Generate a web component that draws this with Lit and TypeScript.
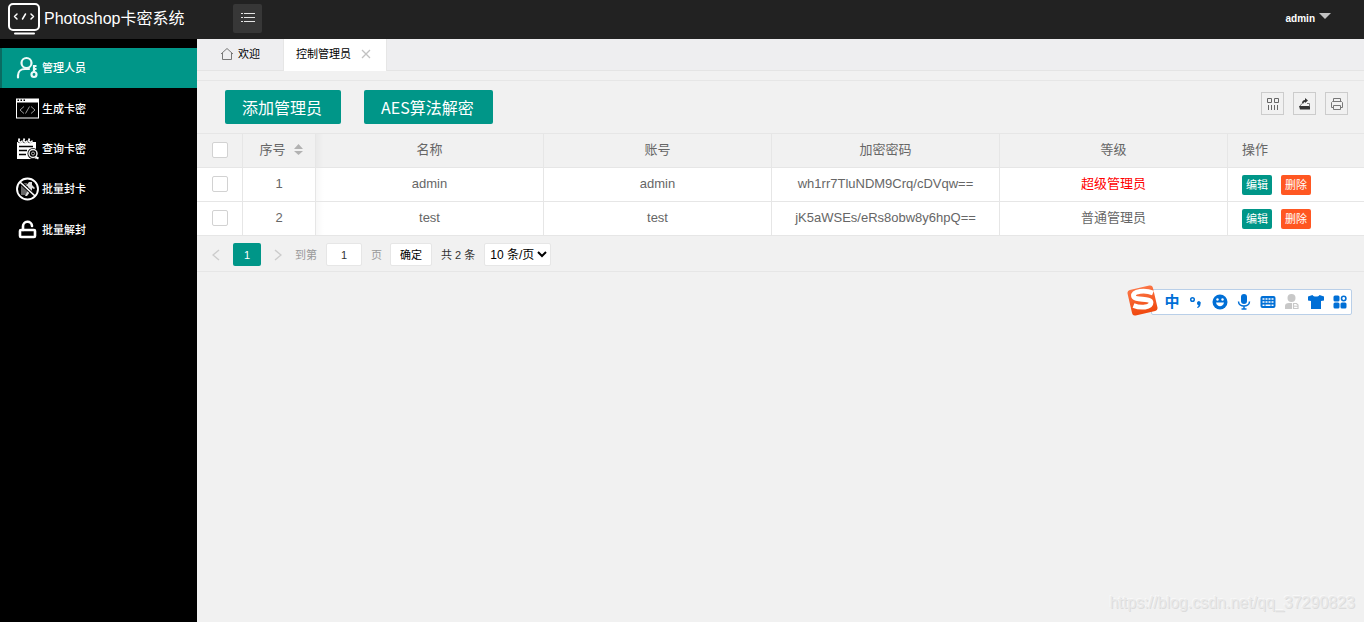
import { LitElement, html, css, svg } from "lit";
import { customElement, state } from "lit/decorators.js";

interface Admin {
  id: number;
  name: string;
  account: string;
  secret: string;
  level: string;
  top: boolean;
}

const ADMINS: Admin[] = [
  { id: 1, name: "admin", account: "admin", secret: "wh1rr7TluNDM9Crq/cDVqw==", level: "超级管理员", top: true },
  { id: 2, name: "test", account: "test", secret: "jK5aWSEs/eRs8obw8y6hpQ==", level: "普通管理员", top: false },
];

const logo = html`<svg class="logo" viewBox="0 0 32 32" fill="none" stroke="#fff" stroke-linecap="round" stroke-linejoin="round" aria-hidden="true">
  <rect x="1" y="1" width="30" height="26" rx="4" stroke-width="2"/>
  <path d="M9 11l-2.500 2.500L9 16M23 11l2.500 2.500L23 16M17.500 11l-3 5" stroke-width="1.500"/>
  <path d="M7 30.500h19" stroke-width="2"/></svg>`;

const menuIcon = html`<svg width="14" height="9" viewBox="0 0 14 9" fill="#e4e4e4" aria-hidden="true">
  <path d="M0 0h2v1H0zM0 4h2v1H0zM0 8h2v1H0zM3 0h11v1H3zM3 4h11v1H3zM3 8h11v1H3z"/></svg>`;

const iconStaff = svg`<g fill="none" stroke="#eefaf8" stroke-width="2.200" stroke-linecap="round">
  <circle cx="10.500" cy="7" r="5"/><path d="M2 21.500v-2c0-4 3-6.500 7-6.500h4"/>
  <circle cx="18" cy="18.500" r="2.500"/><path d="M18 15.500V10h2.500M18 13h2.500" stroke-linecap="butt"/></g>`;
const iconCode = svg`<path fill="#fff" d="M0 1.500h23v20H0zM1 5.500v15h21v-15zM1.500 2.500V4H3V2.500zM4.500 2.500V4H6V2.500zM7.500 2.500V4H9V2.500z" fill-rule="evenodd"/>
  <path d="M8 9.500L4 13l4 3.500M15 9.500l4 3.500-4 3.500M13.500 9.500l-4 7" fill="none" stroke="#999"/>`;
const iconQuery = svg`<path fill="#fff" d="M1 5h19v17H1z"/>
  <path d="M2.500 1.500v2q1.500 2 3 0v-2M7.500 1.500v2q1.500 2 3 0v-2M12.500 1.500v2q1.500 2 3 0v-2" fill="none" stroke="#000" stroke-width="3.500"/>
  <path d="M3.500 1.500q-1.500 3 .5 3.500t2-1.500M8.500 1.500q-1.500 3 .5 3.500t2-1.500M13.500 1.500q-1.500 3 .5 3.500t2-1.500" fill="none" stroke="#fff" stroke-width="1.700"/>
  <path d="M3 9.500h14M3 13.500h8M3 17.500h7" stroke="#000" stroke-width="1.600"/>
  <circle cx="17" cy="16.500" r="5.500" fill="#000"/><circle cx="17" cy="16.500" r="4" fill="none" stroke="#eee" stroke-width="1.500"/>
  <circle cx="17" cy="16.500" r="1.500" fill="none" stroke="#bbb"/><path d="M19.500 20l3 1.500" stroke="#fff" stroke-width="2"/>`;
const iconBan = svg`<path d="M5 6h6v12H5z" fill="#666"/><path d="M13 5h3v3l3 3-1 1-2-1v3l3 5h-2l-3-4-3 4h-2l3-6V9l-2 2-1-1z" fill="#ddd"/>
  <path d="M4 5l15 14" stroke="#000" stroke-width="3.500"/><path d="M4 5l15 14" stroke="#fff" stroke-width="1.700"/>
  <circle cx="11.500" cy="12" r="10.500" fill="none" stroke="#fff" stroke-width="1.900"/>`;
const iconUnlock = svg`<rect x="4" y="12" width="15" height="7" rx="1" fill="none" stroke="#fff" stroke-width="2.600"/>
  <path d="M7 12V8.500a4.500 4.500 0 0 1 9-.5" fill="none" stroke="#fff" stroke-width="2.600" stroke-linecap="round"/>`;

const MENU = [
  { text: "管理人员", icon: iconStaff },
  { text: "生成卡密", icon: iconCode },
  { text: "查询卡密", icon: iconQuery },
  { text: "批量封卡", icon: iconBan },
  { text: "批量解封", icon: iconUnlock },
];

const IME_ICONS = [
  { label: "标点", icon: svg`<circle cx="4.500" cy="5.500" r="1.800" fill="none" stroke-width="1.500"/><path d="M9 9a1.900 1.900 0 1 1 3.500 1c0 2-1 3.500-3 4l-.5-1c1-.3 1.500-1 1.500-1.700C9.500 11 9 10 9 9z" stroke="none"/>` },
  { label: "表情", icon: svg`<circle cx="8" cy="8" r="7.500" stroke="none"/><path d="M4 8.500c1 5 7 5 8 0z" fill="#fff" stroke="none"/><circle cx="5.500" cy="5.500" r="1.200" fill="#fff" stroke="none"/><circle cx="10.500" cy="5.500" r="1.200" fill="#fff" stroke="none"/>` },
  { label: "语音", icon: svg`<rect x="5" y="0" width="6" height="10" rx="3" stroke="none"/><path d="M2.500 7.500c0 6 11 6 11 0M8 12v3M5.500 15h5" fill="none" stroke-width="1.500"/>` },
  { label: "键盘", icon: svg`<rect x=".5" y="2" width="15" height="12" rx="2" stroke="none"/><path d="M2.500 5h11M2.500 8h11" stroke="#fff" stroke-width="1.600" stroke-dasharray="2 1"/><path d="M2.500 11.200h2M5.500 11.200h5M11.500 11.200h2" stroke="#fff" stroke-width="1.600"/>` },
  { label: "账户", icon: svg`<g fill="#c8c8c8" stroke="none"><circle cx="7.500" cy="4" r="4"/><path d="M1 15V12q0-3 4-3h6q3 0 3 3v3z"/><path d="M8 8h7v8H8z" fill="#fff"/><path d="M9.500 9.500h3l1.500 1.500v3.500H9.500z" fill="none" stroke="#c8c8c8" stroke-width="1.200"/><path d="M10 12.200h4" stroke="#c8c8c8"/></g>` },
  { label: "皮肤", icon: svg`<path d="M0 2.500L4.500 1c1 2 6 2 7 0L16 2.500v4l-3 .5v8H3V7l-3-.5z" stroke="none"/>` },
  { label: "工具箱", icon: svg`<rect x="1.500" y="1.500" width="6" height="6" rx="1.500" stroke="none"/><rect x="1.500" y="8.500" width="6" height="6" rx="1.500" stroke="none"/><rect x="8.500" y="8.500" width="6" height="6" rx="1.500" stroke="none"/><circle cx="11.700" cy="4.500" r="2.200" fill="none" stroke-width="1.600"/>` },
];

@customElement("app-root")
export class AppRoot extends LitElement {
  @state() private active = 0;

  static styles = css`
    :host {
      display: flex;
      flex-direction: column;
      position: relative;
      min-height: 100vh;
      background: #f1f1f1;
      color: #666;
      font: 13px/20px "Liberation Sans", "Noto Sans CJK SC", sans-serif;
    }
    *, *::before, *::after { box-sizing: border-box; }
    button, input, select { font: inherit; margin: 0; padding: 0; border: 0; }
    button { cursor: pointer; }
    a { color: inherit; text-decoration: none; }
    svg { display: block; flex: none; }

    .header { display: flex; align-items: center; height: 39px; padding: 0 33px 2px 8px; background: #222; color: #fff; }
    .brand { display: flex; align-items: center; gap: 4px; width: 225px; font-size: 16px; }
    .logo { width: 32px; height: 32px; }
    .toggle { display: grid; place-items: center; width: 29px; height: 29px; padding-bottom: 3px; border-radius: 2px; background: #373737; }
    .user { display: flex; align-items: center; gap: 4px; margin-left: auto; font-size: 10px; font-weight: 700; background: none; color: #fff; }
    .caret { border: 6px solid transparent; border-top-color: #c2c2c2; border-bottom: 0; margin-bottom: 5px; }

    .body { display: flex; flex: 1; }
    .side { width: 197px; padding-top: 9px; background: #000; }
    .menu { display: flex; flex-direction: column; height: 202px; margin: 0; padding: 0; list-style: none; }
    .menu li { flex: 1; display: flex; }
    .item { flex: 1; display: flex; align-items: center; gap: 3px; padding-left: 14px; border-left: 2px solid transparent; color: #fff; font-size: 11px; font-weight: 500; }
    .item.on { background: #009688; border-left-color: #0a6b62; }

    .main { flex: 1; min-width: 0; }
    .tabs { display: flex; height: 32px; border-bottom: 1px solid #e4e4e4; background: #eeeef0; color: #000; font-size: 11px; }
    .tab { display: flex; align-items: center; height: 31px; padding: 0 23px 2px 24px; gap: 5px; border-right: 1px solid #e6e6e6; }
    .tab.on { height: 32px; padding: 0 15px 2px 12px; gap: 10px; background: #fff; }
    .close { display: grid; background: none; }
    .strip { height: 10px; border-bottom: 1px solid #e6e6e6; }
    .tools { display: flex; align-items: flex-start; height: 52px; padding: 9px 16px 0 28px; gap: 23px; }
    .btn { height: 34px; padding: 0 19px 0 17px; border-radius: 2px; background: #009688; color: #fff; font: 16px/32px "Noto Sans CJK SC", sans-serif; white-space: nowrap; }
    .actions { display: flex; gap: 9px; margin: 2px 0 0 auto; }
    .tool { display: grid; place-items: center; width: 23px; height: 23px; border: 1px solid #ccc; background: none; }

    .grid { width: 100%; table-layout: fixed; border-collapse: separate; border-spacing: 0; border-top: 1px solid #e6e6e6; }
    .grid th, .grid td { height: 34px; padding: 0 0 2px; border-right: 1px solid #e6e6e6; border-bottom: 1px solid #e6e6e6; font-weight: 400; text-align: center; line-height: 30px; }
    .grid td { background: #fff; }
    .grid th:last-child, .grid td:last-child { border-right: 0; padding-left: 14px; text-align: left; }
    .grid th:nth-child(3), .grid td:nth-child(3) { background-image: linear-gradient(to right, rgba(0, 0, 0, 0.03), transparent 8px); }
    .c-check { width: 46px; }
    .c-id { width: 73px; }
    .c-op { width: 136px; }
    .check { appearance: none; display: block; width: 16px; height: 16px; margin: 0 auto; border: 1px solid #d2d2d2; border-radius: 2px; background: #fff; }
    .check:checked { background: #009688; }
    .sort { display: flex; align-items: center; justify-content: center; gap: 8px; padding-left: 4px; }
    .red { color: #f00; }
    .ops { display: flex; gap: 9px; padding-top: 2px; }
    .mini { height: 20px; padding: 0 4px; border-radius: 2px; background: #009688; color: #fff; font-size: 11px; line-height: 18px; }
    .mini.del { background: #ff5722; }

    .pager { display: flex; align-items: center; height: 36px; padding: 2px 0 0 15px; border-bottom: 1px solid #e6e6e6; color: #999; font-size: 11px; }
    .arrow { display: grid; place-items: center; width: 8px; height: 23px; background: none; }
    .page { width: 28px; height: 23px; margin: 0 13px; border-radius: 2px; background: #009688; color: #fff; }
    .jump { display: flex; align-items: center; gap: 9px; margin: 0 8px 0 13px; }
    .num { width: 36px; height: 23px; border: 1px solid #e6e6e6; border-radius: 2px; background: #fff; color: #333; text-align: center; }
    .go { width: 42px; height: 23px; border: 1px solid #e6e6e6; border-radius: 2px; background: #fff; color: #000; }
    .total { margin: 0 9px; color: #333; }
    .limit { position: relative; display: flex; align-items: center; }
    .size { appearance: none; width: 67px; height: 23px; padding-left: 5px; border: 1px solid #e6e6e6; border-radius: 2px; background: #fff; color: #000; font-size: 12px; }
    .chev { position: absolute; right: 4px; pointer-events: none; }

    .ime { position: absolute; right: 12px; top: 289px; display: flex; align-items: center; height: 26px; padding: 0 3px 0 12px; gap: 8px; border: 1px solid #b9cfe8; border-radius: 2px; background: #fff; }
    .ime button { display: grid; place-items: center; width: 16px; height: 16px; background: none; color: #006fd6; }
    .ime .lang { font-size: 15px; font-weight: 700; line-height: 16px; }
    .sogou { position: absolute; left: -26px; top: -6px; }
    .mark { position: absolute; right: 9px; bottom: 9px; color: #e9e9e9; font-size: 16px; text-shadow: 1px 1px 0 #dcdcdc, -1px -1px 0 #f8f8f8; }
  `;

  private renderRow(a: Admin) {
    return html`<tr>
      <td><input class="check" type="checkbox" aria-label="选择 ${a.name}"></td>
      <td>${a.id}</td>
      <td>${a.name}</td>
      <td>${a.account}</td>
      <td>${a.secret}</td>
      <td class=${a.top ? "red" : ""}>${a.level}</td>
      <td><div class="ops"><button class="mini">编辑</button><button class="mini del">删除</button></div></td>
    </tr>`;
  }

  render() {
    return html`
      <header class="header">
        <a class="brand" href="#">${logo}<span>Photoshop卡密系统</span></a>
        <button class="toggle" aria-label="菜单">${menuIcon}</button>
        <button class="user">admin<span class="caret"></span></button>
      </header>
      <div class="body">
        <nav class="side">
          <ul class="menu">
            ${MENU.map((m, i) => html`<li><a class="item ${i === this.active ? "on" : ""}" href="#" @click=${() => (this.active = i)}>
              <svg width="23" height="24" viewBox="0 0 23 24" aria-hidden="true">${m.icon}</svg>${m.text}</a></li>`)}
          </ul>
        </nav>
        <main class="main">
          <div class="tabs">
            <a class="tab" href="#"><svg width="12" height="12" viewBox="0 0 12 12" fill="none" stroke="#777" aria-hidden="true"><path d="M0 6l6-5.500L12 6M1.500 5v6.500h9V5"/></svg>欢迎</a>
            <div class="tab on">控制管理员<button class="close" aria-label="关闭"><svg width="10" height="10" viewBox="0 0 10 10" stroke="#c2c2c2" stroke-width="1.300" aria-hidden="true"><path d="M1 1l8 8M9 1l-8 8"/></svg></button></div>
          </div>
          <div class="strip"></div>
          <div class="tools">
            <button class="btn">添加管理员</button>
            <button class="btn">AES算法解密</button>
            <div class="actions">
              <button class="tool" aria-label="筛选列"><svg width="12" height="12" viewBox="0 0 12 12" fill="none" stroke="#666" aria-hidden="true"><path d="M.5.5h4v4h-4zM7.500.5h4v4h-4zM1.500 7v5M4.500 7v5M7.500 7v5M10.500 7v5"/></svg></button>
              <button class="tool" aria-label="导出"><svg width="12" height="12" viewBox="0 0 12 12" aria-hidden="true"><path d="M0 8h11v3.500H1zM3 5.500c0-2 1-3.500 3-3.500V0l3 2.500L6 5V4C4.500 4 4.500 5.500 4.500 5.500z" fill="#333"/><path d="M3 5.500L1 8M8 5.500h2.500v3" stroke="#777" fill="none"/></svg></button>
              <button class="tool" aria-label="打印"><svg width="12" height="12" viewBox="0 0 12 12" fill="none" stroke="#777" aria-hidden="true"><path d="M2.500 3.500v-3h7v3M2.500 9.500h-2v-5l1-1h9l1 1v5h-2M2.500 7.500h7v4h-7z"/></svg></button>
            </div>
          </div>
          <table class="grid">
            <colgroup><col class="c-check"><col class="c-id"><col><col><col><col><col class="c-op"></colgroup>
            <thead><tr>
              <th><input class="check" type="checkbox" aria-label="全选"></th>
              <th><div class="sort">序号<svg width="9" height="11" viewBox="0 0 9 11" fill="#b2b2b2" aria-hidden="true"><path d="M0 5l4.500-5L9 5zM0 7h9l-4.500 4z"/></svg></div></th>
              <th>名称</th><th>账号</th><th>加密密码</th><th>等级</th><th>操作</th>
            </tr></thead>
            <tbody>${ADMINS.map((a) => this.renderRow(a))}</tbody>
          </table>
          <div class="pager">
            <button class="arrow" aria-label="上一页"><svg width="8" height="12" viewBox="0 0 8 12" fill="none" stroke="#ccc" stroke-width="1.400"><path d="M7 1L1 6l6 5"/></svg></button>
            <button class="page">1</button>
            <button class="arrow" aria-label="下一页"><svg width="8" height="12" viewBox="0 0 8 12" fill="none" stroke="#ccc" stroke-width="1.400"><path d="M1 1l6 5-6 5"/></svg></button>
            <label class="jump">到第<input class="num" type="text" .value=${"1"}>页</label>
            <button class="go">确定</button>
            <span class="total">共 2 条</span>
            <span class="limit">
              <select class="size" aria-label="每页条数"><option>10 条/页</option><option>20 条/页</option></select>
              <svg class="chev" width="10" height="7" viewBox="0 0 10 7" fill="none" stroke="#000" stroke-width="2"><path d="M1 1l4 4 4-4"/></svg>
            </span>
          </div>
        </main>
      </div>
      <div class="ime">
        <svg class="sogou" width="33" height="32" viewBox="0 0 33 32" aria-hidden="true">
          <defs><linearGradient id="tile" x1="0" y1="0" x2="0" y2="1"><stop offset="0" stop-color="#fb7444"/><stop offset="1" stop-color="#f0480e"/></linearGradient></defs>
          <rect x="3.500" y="3.500" width="26" height="26" rx="3" fill="url(#tile)" transform="rotate(-13 16.500 16.500)"/>
          <path d="M27 9C19 5.500 7 7 7.500 12c.5 5 17.500 1.500 17.500 6.500 0 5-10 6-17.500 3" fill="none" stroke="#fff" stroke-width="4.800"/>
        </svg>
        <button class="lang">中</button>
        ${IME_ICONS.map((m) => html`<button aria-label=${m.label}><svg width="16" height="16" viewBox="0 0 16 16" fill="currentColor" stroke="currentColor">${m.icon}</svg></button>`)}
      </div>
      <div class="mark">https://blog.csdn.net/qq_37290823</div>
    `;
  }
}
